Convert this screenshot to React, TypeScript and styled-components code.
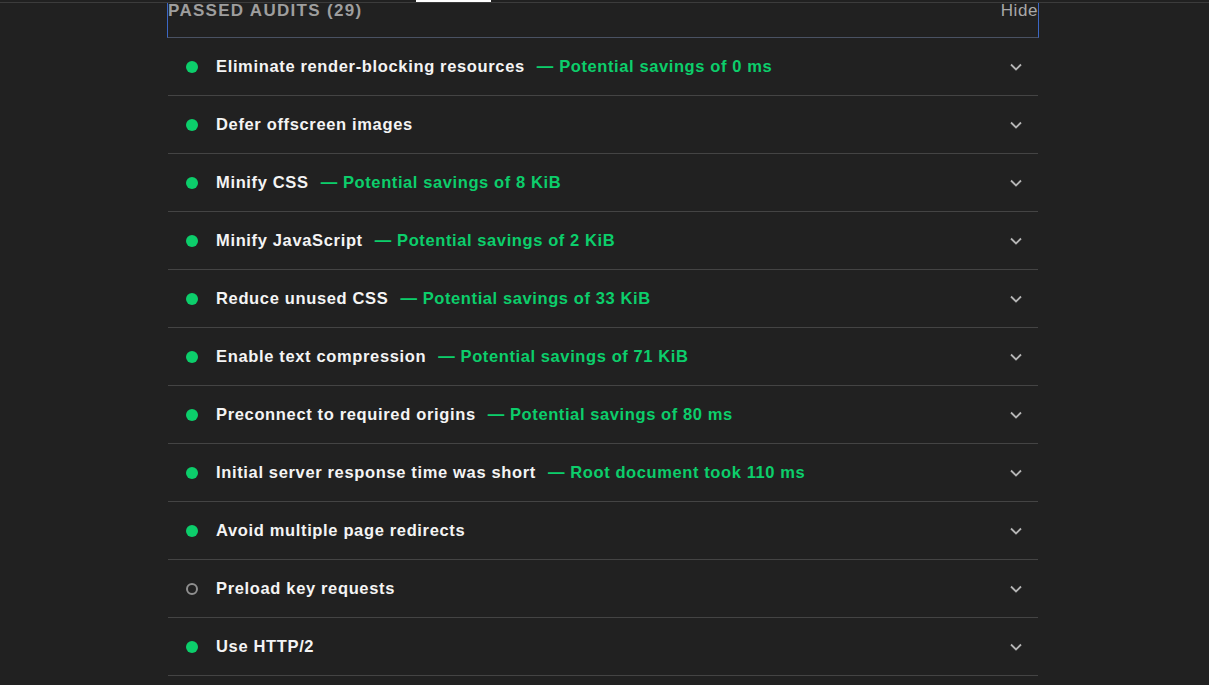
import React from "react";
import styled, { createGlobalStyle } from "styled-components";

const Global = createGlobalStyle`
  html, body { margin: 0; padding: 0; background: #212121; }
  body { font-family: "Liberation Sans", Arial, sans-serif; }
`;

const Page = styled.div`
  width: 1209px;
  height: 685px;
  overflow: hidden;
  background: #212121;
`;

const TabBar = styled.div`
  height: 2px;
  border-bottom: 1px solid #3c3c3c;
  display: flex;
  align-items: flex-end;
`;

const TabIndicator = styled.div`
  margin-left: 416px;
  width: 75px;
  height: 2px;
  background: #ffffff;
`;

const Main = styled.div`
  width: 870px;
  margin-left: 168px;
`;

const Header = styled.div`
  height: 35px;
  box-sizing: border-box;
  display: flex;
  justify-content: space-between;
  align-items: flex-start;
  border-left: 1px solid #3b67c4;
  border-right: 1px solid #3b67c4;
  border-bottom: 1px solid #4a5263;
  margin-left: -1px;
  margin-right: -1px;
`;

const HeaderTitle = styled.span`
  color: #9e9e9e;
  font-size: 17px;
  font-weight: bold;
  letter-spacing: 1.3px;
  line-height: 17px;
  margin-top: -1px;
`;

const HideLink = styled.span`
  color: #a8a8a8;
  font-size: 17px;
  letter-spacing: 0.6px;
  line-height: 17px;
  margin-top: -1px;
`;

const Row = styled.div`
  height: 57px;
  border-bottom: 1px solid #444444;
  display: flex;
  align-items: center;
  padding: 0 15px 0 18px;
`;

const Dot = styled.span<{ $pass: boolean }>`
  width: 12px;
  height: 12px;
  box-sizing: border-box;
  border-radius: 50%;
  flex: none;
  margin-right: 18px;
  background: ${(p) => (p.$pass ? "#0cce6b" : "transparent")};
  border: ${(p) => (p.$pass ? "none" : "2px solid #8f8f8f")};
`;

const Title = styled.span`
  color: #f4f4f4;
  font-size: 16.5px;
  letter-spacing: 0.65px;
  font-weight: bold;
`;

const Savings = styled.span`
  color: #0cce6b;
  font-size: 16.5px;
  letter-spacing: 0.6px;
  font-weight: bold;
  margin-left: 12px;
`;

const Spacer = styled.div`
  flex: 1;
`;

const Chevron = () => (
  <svg width="14" height="14" viewBox="0 0 14 14" fill="none">
    <path d="M2 4.5 L7 9.5 L12 4.5" stroke="#b5b5b5" strokeWidth="1.8" />
  </svg>
);

const audits: { title: string; savings?: string; pass: boolean }[] = [
  { title: "Eliminate render-blocking resources", savings: "— Potential savings of 0 ms", pass: true },
  { title: "Defer offscreen images", pass: true },
  { title: "Minify CSS", savings: "— Potential savings of 8 KiB", pass: true },
  { title: "Minify JavaScript", savings: "— Potential savings of 2 KiB", pass: true },
  { title: "Reduce unused CSS", savings: "— Potential savings of 33 KiB", pass: true },
  { title: "Enable text compression", savings: "— Potential savings of 71 KiB", pass: true },
  { title: "Preconnect to required origins", savings: "— Potential savings of 80 ms", pass: true },
  { title: "Initial server response time was short", savings: "— Root document took 110 ms", pass: true },
  { title: "Avoid multiple page redirects", pass: true },
  { title: "Preload key requests", pass: false },
  { title: "Use HTTP/2", pass: true },
];

export default function App() {
  return (
    <Page>
      <Global />
      <TabBar>
        <TabIndicator />
      </TabBar>
      <Main>
        <Header>
          <HeaderTitle>PASSED AUDITS (29)</HeaderTitle>
          <HideLink>Hide</HideLink>
        </Header>
        {audits.map((a) => (
          <Row key={a.title}>
            <Dot $pass={a.pass} />
            <Title>{a.title}</Title>
            {a.savings && <Savings>{a.savings}</Savings>}
            <Spacer />
            <Chevron />
          </Row>
        ))}
      </Main>
    </Page>
  );
}
